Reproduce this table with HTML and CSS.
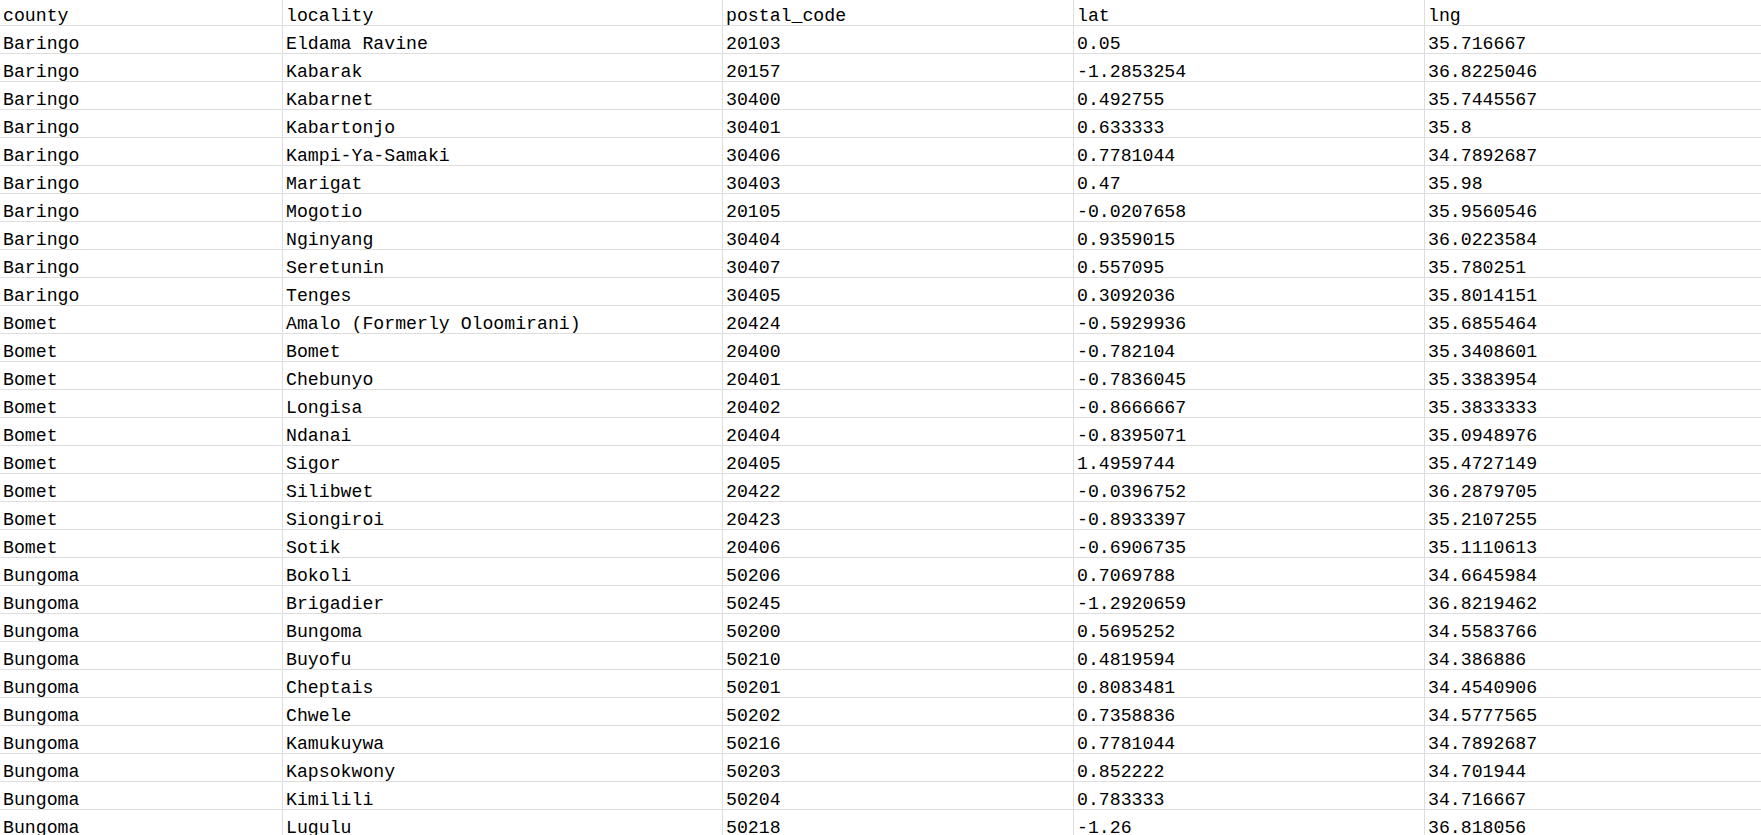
FILE: index.html
```html
<!DOCTYPE html>
<html>
<head>
<meta charset="utf-8">
<link rel="stylesheet" href="styles.css">
</head>
<body>
<div class="sheet">
<div class="row head"><div class="c">county</div><div class="c">locality</div><div class="c">postal_code</div><div class="c">lat</div><div class="c">lng</div></div>
<div class="row"><div class="c">Baringo</div><div class="c">Eldama Ravine</div><div class="c">20103</div><div class="c">0.05</div><div class="c">35.716667</div></div>
<div class="row"><div class="c">Baringo</div><div class="c">Kabarak</div><div class="c">20157</div><div class="c">-1.2853254</div><div class="c">36.8225046</div></div>
<div class="row"><div class="c">Baringo</div><div class="c">Kabarnet</div><div class="c">30400</div><div class="c">0.492755</div><div class="c">35.7445567</div></div>
<div class="row"><div class="c">Baringo</div><div class="c">Kabartonjo</div><div class="c">30401</div><div class="c">0.633333</div><div class="c">35.8</div></div>
<div class="row"><div class="c">Baringo</div><div class="c">Kampi-Ya-Samaki</div><div class="c">30406</div><div class="c">0.7781044</div><div class="c">34.7892687</div></div>
<div class="row"><div class="c">Baringo</div><div class="c">Marigat</div><div class="c">30403</div><div class="c">0.47</div><div class="c">35.98</div></div>
<div class="row"><div class="c">Baringo</div><div class="c">Mogotio</div><div class="c">20105</div><div class="c">-0.0207658</div><div class="c">35.9560546</div></div>
<div class="row"><div class="c">Baringo</div><div class="c">Nginyang</div><div class="c">30404</div><div class="c">0.9359015</div><div class="c">36.0223584</div></div>
<div class="row"><div class="c">Baringo</div><div class="c">Seretunin</div><div class="c">30407</div><div class="c">0.557095</div><div class="c">35.780251</div></div>
<div class="row"><div class="c">Baringo</div><div class="c">Tenges</div><div class="c">30405</div><div class="c">0.3092036</div><div class="c">35.8014151</div></div>
<div class="row"><div class="c">Bomet</div><div class="c">Amalo (Formerly Oloomirani)</div><div class="c">20424</div><div class="c">-0.5929936</div><div class="c">35.6855464</div></div>
<div class="row"><div class="c">Bomet</div><div class="c">Bomet</div><div class="c">20400</div><div class="c">-0.782104</div><div class="c">35.3408601</div></div>
<div class="row"><div class="c">Bomet</div><div class="c">Chebunyo</div><div class="c">20401</div><div class="c">-0.7836045</div><div class="c">35.3383954</div></div>
<div class="row"><div class="c">Bomet</div><div class="c">Longisa</div><div class="c">20402</div><div class="c">-0.8666667</div><div class="c">35.3833333</div></div>
<div class="row"><div class="c">Bomet</div><div class="c">Ndanai</div><div class="c">20404</div><div class="c">-0.8395071</div><div class="c">35.0948976</div></div>
<div class="row"><div class="c">Bomet</div><div class="c">Sigor</div><div class="c">20405</div><div class="c">1.4959744</div><div class="c">35.4727149</div></div>
<div class="row"><div class="c">Bomet</div><div class="c">Silibwet</div><div class="c">20422</div><div class="c">-0.0396752</div><div class="c">36.2879705</div></div>
<div class="row"><div class="c">Bomet</div><div class="c">Siongiroi</div><div class="c">20423</div><div class="c">-0.8933397</div><div class="c">35.2107255</div></div>
<div class="row"><div class="c">Bomet</div><div class="c">Sotik</div><div class="c">20406</div><div class="c">-0.6906735</div><div class="c">35.1110613</div></div>
<div class="row"><div class="c">Bungoma</div><div class="c">Bokoli</div><div class="c">50206</div><div class="c">0.7069788</div><div class="c">34.6645984</div></div>
<div class="row"><div class="c">Bungoma</div><div class="c">Brigadier</div><div class="c">50245</div><div class="c">-1.2920659</div><div class="c">36.8219462</div></div>
<div class="row"><div class="c">Bungoma</div><div class="c">Bungoma</div><div class="c">50200</div><div class="c">0.5695252</div><div class="c">34.5583766</div></div>
<div class="row"><div class="c">Bungoma</div><div class="c">Buyofu</div><div class="c">50210</div><div class="c">0.4819594</div><div class="c">34.386886</div></div>
<div class="row"><div class="c">Bungoma</div><div class="c">Cheptais</div><div class="c">50201</div><div class="c">0.8083481</div><div class="c">34.4540906</div></div>
<div class="row"><div class="c">Bungoma</div><div class="c">Chwele</div><div class="c">50202</div><div class="c">0.7358836</div><div class="c">34.5777565</div></div>
<div class="row"><div class="c">Bungoma</div><div class="c">Kamukuywa</div><div class="c">50216</div><div class="c">0.7781044</div><div class="c">34.7892687</div></div>
<div class="row"><div class="c">Bungoma</div><div class="c">Kapsokwony</div><div class="c">50203</div><div class="c">0.852222</div><div class="c">34.701944</div></div>
<div class="row"><div class="c">Bungoma</div><div class="c">Kimilili</div><div class="c">50204</div><div class="c">0.783333</div><div class="c">34.716667</div></div>
<div class="row"><div class="c">Bungoma</div><div class="c">Lugulu</div><div class="c">50218</div><div class="c">-1.26</div><div class="c">36.818056</div></div>
</div>
</body>
</html>
```

FILE: styles.css
```css
html, body {
  margin: 0;
  padding: 0;
  background: #ffffff;
  overflow: hidden;
  height: 835px;
}
.sheet {
  font-family: "Liberation Mono", "DejaVu Sans Mono", monospace;
  font-size: 18.2px;
  color: #000000;
  width: 1761px;
}
.row {
  display: grid;
  grid-template-columns: 283px 440px 351px 351px 1fr;
  height: 28px;
}
.row.head {
  height: 26px;
}
.c {
  box-sizing: border-box;
  border-right: 1px solid #dedede;
  border-bottom: 1px solid #dedede;
  padding: 7px 0 0 3px;
  line-height: 22px;
  white-space: nowrap;
  overflow: hidden;
}
.head .c {
  padding-top: 5px;
}
.c:last-child {
  border-right: none;
}
```
